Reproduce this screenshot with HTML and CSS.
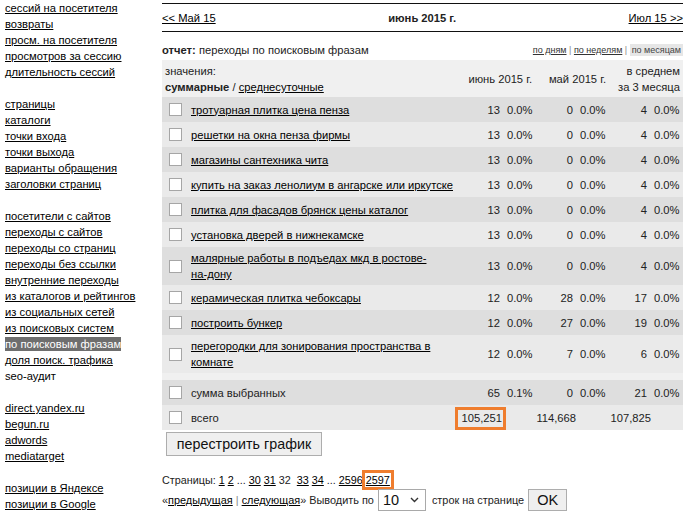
FILE: index.html
```html
<!DOCTYPE html>
<html lang="ru">
<head>
<meta charset="utf-8">
<title>переходы по поисковым фразам</title>
<link rel="stylesheet" href="styles.css">
</head>
<body>
<div class="page">
  <nav class="side">
    <div class="group">
      <div><a href="#">сессий на посетителя</a></div>
      <div><a href="#">возвраты</a></div>
      <div><a href="#">просм. на посетителя</a></div>
      <div><a href="#">просмотров за сессию</a></div>
      <div><a href="#">длительность сессий</a></div>
    </div>
    <div class="group">
      <div><a href="#">страницы</a></div>
      <div><a href="#">каталоги</a></div>
      <div><a href="#">точки входа</a></div>
      <div><a href="#">точки выхода</a></div>
      <div><a href="#">варианты обращения</a></div>
      <div><a href="#">заголовки страниц</a></div>
    </div>
    <div class="group">
      <div><a href="#">посетители с сайтов</a></div>
      <div><a href="#">переходы с сайтов</a></div>
      <div><a href="#">переходы со страниц</a></div>
      <div><a href="#">переходы без ссылки</a></div>
      <div><a href="#">внутренние переходы</a></div>
      <div><a href="#">из каталогов и рейтингов</a></div>
      <div><a href="#">из социальных сетей</a></div>
      <div><a href="#">из поисковых систем</a></div>
      <div><span class="active">по поисковым фразам</span></div>
      <div><a href="#">доля поиск. трафика</a></div>
      <div><span class="plain">seo-аудит</span></div>
    </div>
    <div class="group">
      <div><a href="#">direct.yandex.ru</a></div>
      <div><a href="#">begun.ru</a></div>
      <div><a href="#">adwords</a></div>
      <div><a href="#">mediatarget</a></div>
    </div>
    <div class="group">
      <div><a href="#">позиции в Яндексе</a></div>
      <div><a href="#">позиции в Google</a></div>
    </div>
  </nav>

  <main class="main">
    <div class="period">
      <a href="#">&lt;&lt; Май 15</a>
      <b>июнь 2015 г.</b>
      <a href="#">Июл 15 &gt;&gt;</a>
    </div>

    <div class="report">
      <div><b>отчет:</b> переходы по поисковым фразам</div>
      <div class="modes"><a href="#">по дням</a> <span class="sep">|</span> <a href="#">по неделям</a> <span class="sep">|</span> <span class="cur">по месяцам</span></div>
    </div>

    <table class="stats">
      <colgroup>
        <col class="c-cb"><col class="c-ph"><col class="c-n1"><col class="c-p1"><col class="c-n2"><col class="c-p2"><col class="c-n3"><col class="c-p3">
      </colgroup>
      <thead>
        <tr>
          <th colspan="2" class="hl">значения:<br><b>суммарные</b> / <a href="#">среднесуточные</a></th>
          <th colspan="2" class="hr">июнь 2015 г.</th>
          <th colspan="2" class="hr">май 2015 г.</th>
          <th colspan="2" class="hr">в среднем<br>за 3 месяца</th>
        </tr>
      </thead>
      <tbody>
        <tr class="dk"><td class="cb"><input type="checkbox"></td><td class="ph"><a href="#">тротуарная плитка цена пенза</a></td><td class="n">13</td><td class="p">0.0%</td><td class="n">0</td><td class="p">0.0%</td><td class="n">4</td><td class="p">0.0%</td></tr>
        <tr class="lt"><td class="cb"><input type="checkbox"></td><td class="ph"><a href="#">решетки на окна пенза фирмы</a></td><td class="n">13</td><td class="p">0.0%</td><td class="n">0</td><td class="p">0.0%</td><td class="n">4</td><td class="p">0.0%</td></tr>
        <tr class="dk"><td class="cb"><input type="checkbox"></td><td class="ph"><a href="#">магазины сантехника чита</a></td><td class="n">13</td><td class="p">0.0%</td><td class="n">0</td><td class="p">0.0%</td><td class="n">4</td><td class="p">0.0%</td></tr>
        <tr class="lt"><td class="cb"><input type="checkbox"></td><td class="ph"><a href="#">купить на заказ ленолиум в ангарске или иркутске</a></td><td class="n">13</td><td class="p">0.0%</td><td class="n">0</td><td class="p">0.0%</td><td class="n">4</td><td class="p">0.0%</td></tr>
        <tr class="dk"><td class="cb"><input type="checkbox"></td><td class="ph"><a href="#">плитка для фасадов брянск цены каталог</a></td><td class="n">13</td><td class="p">0.0%</td><td class="n">0</td><td class="p">0.0%</td><td class="n">4</td><td class="p">0.0%</td></tr>
        <tr class="lt"><td class="cb"><input type="checkbox"></td><td class="ph"><a href="#">установка дверей в нижнекамске</a></td><td class="n">13</td><td class="p">0.0%</td><td class="n">0</td><td class="p">0.0%</td><td class="n">4</td><td class="p">0.0%</td></tr>
        <tr class="dk"><td class="cb"><input type="checkbox"></td><td class="ph"><a href="#">малярные работы в подъедах мкд в ростове-<span class="nw">на-дону</span></a></td><td class="n">13</td><td class="p">0.0%</td><td class="n">0</td><td class="p">0.0%</td><td class="n">4</td><td class="p">0.0%</td></tr>
        <tr class="lt"><td class="cb"><input type="checkbox"></td><td class="ph"><a href="#">керамическая плитка чебоксары</a></td><td class="n">12</td><td class="p">0.0%</td><td class="n">28</td><td class="p">0.0%</td><td class="n">17</td><td class="p">0.0%</td></tr>
        <tr class="dk"><td class="cb"><input type="checkbox"></td><td class="ph"><a href="#">построить бункер</a></td><td class="n">12</td><td class="p">0.0%</td><td class="n">27</td><td class="p">0.0%</td><td class="n">19</td><td class="p">0.0%</td></tr>
        <tr class="lt"><td class="cb"><input type="checkbox"></td><td class="ph"><a href="#">перегородки для зонирования пространства в комнате</a></td><td class="n">12</td><td class="p">0.0%</td><td class="n">7</td><td class="p">0.0%</td><td class="n">6</td><td class="p">0.0%</td></tr>
        <tr class="gap"><td colspan="8"></td></tr>
        <tr class="dk"><td class="cb"><input type="checkbox"></td><td class="ph">сумма выбранных</td><td class="n">65</td><td class="p">0.1%</td><td class="n">0</td><td class="p">0.0%</td><td class="n">21</td><td class="p">0.0%</td></tr>
        <tr class="lt total"><td class="cb"><input type="checkbox"></td><td class="ph">всего</td><td class="t" colspan="2"><span class="mark-box">105,251</span></td><td class="t" colspan="2">114,668</td><td class="t" colspan="2">107,825</td></tr>
      </tbody>
    </table>

    <button class="rebuild" type="button">перестроить график</button>

    <div class="pages">Страницы: <a href="#">1</a> <a href="#">2</a> ... <a href="#">30</a> <a href="#">31</a> 32 &nbsp;<a href="#">33</a> <a href="#">34</a> ... <a href="#">2596</a> <a href="#" class="mark">2597</a></div>

    <div class="pager">
      <span>«<a href="#">предыдущая</a> <span class="sep">|</span> <a href="#">следующая</a>» Выводить по</span>
      <span class="sel">
        <select class="rows"><option>10</option><option>20</option><option>50</option></select>
        <svg class="chev" width="9" height="6" viewBox="0 0 9 6"><path d="M1 1 L4.5 4.5 L8 1" fill="none" stroke="#333" stroke-width="1.4"/></svg>
      </span>
      <span>строк на странице</span>
      <button class="ok" type="button">OK</button>
    </div>
  </main>
</div>
</body>
</html>
```
FILE: styles.css
```css
* { box-sizing: border-box; }
html, body { margin: 0; padding: 0; background: #fff; }
body {
  font-family: "Liberation Sans", Arial, sans-serif;
  font-size: 11.2px;
  color: #222;
}
a { color: #000; text-decoration: underline; }
.nw { white-space: nowrap; }

.page { display: flex; width: 690px; }

/* sidebar */
.side { width: 162px; padding-left: 5px; line-height: 16px; flex: none; }
.side .group { margin-bottom: 16px; }
.side .active { background: #6e6e6e; color: #fff; padding: 1px 0; }
.side .plain { color: #000; }

/* main */
.main { width: 521px; flex: none; }
.period {
  margin-top: 3px;
  height: 29px;
  border-top: 1px solid #111;
  border-bottom: 1px solid #111;
  display: flex;
  justify-content: space-between;
  align-items: center;
}
.report {
  display: flex;
  justify-content: space-between;
  align-items: center;
  padding: 10px 0 2px;
  line-height: 16px;
}
.modes { font-size: 9px; color: #444; }
.modes a { color: #333; }
.modes .sep { color: #888; }
.modes .cur { background: #e6e6e6; padding: 1px 2px; }

/* table */
.stats {
  width: 521px;
  border-collapse: collapse;
  table-layout: fixed;
  line-height: 16px;
}
.c-cb { width: 24px; }
.c-ph { width: 272px; }
.c-n1 { width: 45px; }
.c-p1 { width: 32px; }
.c-n2 { width: 41px; }
.c-p2 { width: 33px; }
.c-n3 { width: 41px; }
.c-p3 { width: 33px; }

.stats th {
  background: #f0f0f0;
  font-weight: normal;
  padding: 3px 3px 2px;
  vertical-align: middle;
}
.stats th.hl { text-align: left; }
.stats th.hr { text-align: right; }
.stats td { padding: 3px; vertical-align: middle; white-space: nowrap; }
.stats td.ph { padding-left: 5px; padding-right: 0; white-space: normal; }
.stats td.cb { padding-left: 7px; padding-right: 0; }
.stats td.n { text-align: right; padding-right: 3px; }
.stats td.p { text-align: left; padding-left: 4px; padding-right: 0; }
.stats tr.dk td { background: #dedede; }
.stats tr.lt td { background: #eaeaea; }
.stats tr.gap td { background: #f0f0f0; height: 7px; padding: 0; }

.stats input[type="checkbox"] {
  appearance: none;
  -webkit-appearance: none;
  display: block;
  width: 13px;
  height: 13px;
  margin: 3px 0;
  background: #fff;
  border: 1px solid #a6a6a6;
}

.total .t { text-align: right; padding-left: 0; }
.total .t:nth-child(3) { padding-right: 33px; }
.total .t:nth-child(4) { padding-right: 33px; }
.total .t:nth-child(5) { padding-right: 32px; }

.mark-box {
  display: inline-block;
  line-height: 15px;
  padding-left: 3px;
  outline: 3px solid #ef7d2e;
  outline-offset: 1px;
}

/* controls */
.rebuild {
  display: block;
  margin: 2px 0 0 4px;
  width: 156px;
  height: 24px;
  padding: 0;
  font-family: "Liberation Sans", Arial, sans-serif;
  font-size: 14.3px;
  color: #111;
  background: #efefef;
  border: 1px solid #adadad;
  border-radius: 0;
}
.pages { margin-top: 16px; line-height: 16px; font-size: 10.8px; }
.mark {
  outline: 3px solid #ef7d2e;
  outline-offset: 1px;
}
.pager {
  margin-top: 1px;
  height: 22px;
  display: flex;
  align-items: center;
  white-space: nowrap;
  font-size: 10.9px;
}
.pager .sep { color: #888; }
.sel { position: relative; margin: 0 6px 0 4px; display: inline-block; height: 22px; }
.rows {
  appearance: none;
  -webkit-appearance: none;
  width: 48px;
  height: 22px;
  padding: 0 0 0 4px;
  font-family: "Liberation Sans", Arial, sans-serif;
  font-size: 14.5px;
  color: #111;
  background: #fff;
  border: 1px solid #a9a9a9;
  border-radius: 0;
}
.chev { position: absolute; right: 7px; top: 8px; }
.ok {
  margin-left: 4px;
  width: 39px;
  height: 22px;
  padding: 0;
  font-family: "Liberation Sans", Arial, sans-serif;
  font-size: 14.5px;
  color: #111;
  background: #efefef;
  border: 1px solid #adadad;
  border-radius: 0;
}
```
